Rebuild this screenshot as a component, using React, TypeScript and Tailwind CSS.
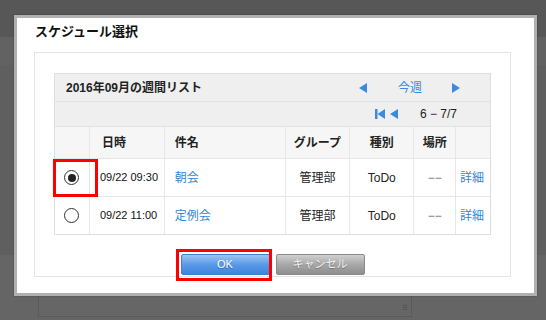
import React from 'react'

const font = "font-['Liberation_Sans','Noto_Sans_CJK_JP',sans-serif]"

function TriLeft({ className = '' }: { className?: string }) {
  return (
    <svg width="8" height="10" viewBox="0 0 8 10" className={className}>
      <polygon points="8,0 8,10 0,5" fill="#3a8ae0" />
    </svg>
  )
}

function TriRight({ className = '' }: { className?: string }) {
  return (
    <svg width="8" height="10" viewBox="0 0 8 10" className={className}>
      <polygon points="0,0 0,10 8,5" fill="#3a8ae0" />
    </svg>
  )
}

function FirstPage() {
  return (
    <svg width="10" height="10" viewBox="0 0 10 10">
      <rect x="0" y="0" width="2.5" height="10" fill="#3a8ae0" />
      <polygon points="10,0 10,10 2.5,5" fill="#3a8ae0" />
    </svg>
  )
}

function Radio({ checked }: { checked?: boolean }) {
  return (
    <div className="w-[15px] h-[15px] rounded-full border border-[#333] bg-white flex items-center justify-center">
      {checked && <div className="w-[8px] h-[8px] rounded-full bg-[#222]" />}
    </div>
  )
}

const cols = ['w-[35px]', 'w-[75px]', 'w-[121px]', 'w-[65px]', 'w-[64px]', 'w-[42px]', 'w-[34px]']

const rows = [
  { time: '09/22 09:30', title: '朝会', checked: true, h: 'h-[38px]' },
  { time: '09/22 11:00', title: '定例会', checked: false, h: 'h-[37px]' },
]

export default function App() {
  return (
    <div className={`relative w-[546px] h-[320px] overflow-hidden bg-[#656565] ${font}`}>
      {/* page behind the overlay */}
      <div className="h-[37px] bg-[#575757]" />
      <div className="h-[28px] bg-[#626262]" />
      <div className="h-[190px] bg-[#5f5f5f]" />
      <div className="ml-[38px] w-[374px] h-[62px] border border-[#5a5a5a] bg-[#666666] relative">
        <div className="absolute right-[3px] bottom-[3px] text-[8px] leading-none text-[#4e4e4e]">⠿</div>
      </div>

      {/* dialog */}
      <div className="absolute left-[14px] top-[15px] w-[523px] h-[281px] border-[3px] border-[#b0b0b0] bg-white shadow-[0_0_2px_rgba(0,0,0,0.3)]">
        <div className="h-[34px] pl-[18px] pt-[6px] text-[13px] leading-[16px] font-bold text-[#111]">
          スケジュール選択
        </div>
        <div className="ml-[17px] w-[477px] h-[225px] border border-[#e4e4e4] pt-[20px] px-[19px]">
          <div className="w-[437px] border border-[#dedede] text-[12px] text-[#222]">
            <div className="h-[28px] bg-[#efefef] border-b border-[#e2e2e2] flex items-center pl-[11px] pr-[30px]">
              <span className="font-bold">2016年09月の週間リスト</span>
              <div className="ml-auto flex items-center">
                <TriLeft />
                <span className="ml-[31px] text-[#3a8ae0]">今週</span>
                <TriRight className="ml-[30px]" />
              </div>
            </div>
            <div className="h-[25px] bg-[#efefef] border-b border-[#e2e2e2] flex items-center justify-end pr-[33px]">
              <FirstPage />
              <TriLeft className="ml-[5px]" />
              <span className="ml-[22px]">6 − 7/7</span>
            </div>
            <div className="h-[32px] bg-[#f6f6f6] border-b border-[#e6e6e6] flex font-bold">
              <div className={`${cols[0]} border-r border-[#e6e6e6]`} />
              <div className={`${cols[1]} border-r border-[#e6e6e6] flex items-center pl-[12px]`}>日時</div>
              <div className={`${cols[2]} border-r border-[#e6e6e6] flex items-center pl-[10px]`}>件名</div>
              <div className={`${cols[3]} border-r border-[#e6e6e6] flex items-center justify-center`}>グループ</div>
              <div className={`${cols[4]} border-r border-[#e6e6e6] flex items-center justify-center`}>種別</div>
              <div className={`${cols[5]} border-r border-[#e6e6e6] flex items-center justify-center`}>場所</div>
              <div className={cols[6]} />
            </div>
            {rows.map((r, i) => (
              <div key={i} className={`${r.h} bg-white flex ${i === 0 ? 'border-b border-[#e6e6e6]' : ''}`}>
                <div className={`${cols[0]} border-r border-[#e6e6e6] flex items-center justify-center`}>
                  <Radio checked={r.checked} />
                </div>
                <div className={`${cols[1]} border-r border-[#e6e6e6] flex items-center pl-[10px] text-[11px] text-[#111]`}>{r.time}</div>
                <div className={`${cols[2]} border-r border-[#e6e6e6] flex items-center pl-[10px] text-[#3585d6]`}>{r.title}</div>
                <div className={`${cols[3]} border-r border-[#e6e6e6] flex items-center justify-center`}>管理部</div>
                <div className={`${cols[4]} border-r border-[#e6e6e6] flex items-center justify-center`}>ToDo</div>
                <div className={`${cols[5]} border-r border-[#e6e6e6] flex items-center justify-center text-[#777]`}>−−</div>
                <div className={`${cols[6]} flex items-center pl-[4px] text-[#3585d6]`}>詳細</div>
              </div>
            ))}
          </div>
          <div className="mt-[19px] flex justify-center gap-[6px]">
            <button className="w-[89px] h-[21px] rounded-[2px] border border-[#3f7fcf] bg-gradient-to-b from-[#9cc4f2] via-[#5a9ae6] to-[#3a85e0] text-[11px] text-white [text-shadow:0_1px_1px_rgba(0,0,0,0.3)]">
              OK
            </button>
            <button className="w-[89px] h-[21px] rounded-[2px] border border-[#8a8a8a] bg-gradient-to-b from-[#d0d0d0] via-[#a8a8a8] to-[#8e8e8e] text-[11px] text-[#f4f4f4] [text-shadow:0_1px_1px_rgba(0,0,0,0.3)]">
              キャンセル
            </button>
          </div>
        </div>
      </div>

      {/* annotation frames */}
      <div className="absolute left-[53px] top-[159px] w-[45px] h-[38px] border-[3px] border-[#ff0000]" />
      <div className="absolute left-[176px] top-[249px] w-[96px] h-[32px] border-[3px] border-[#ff0000]" />
    </div>
  )
}
